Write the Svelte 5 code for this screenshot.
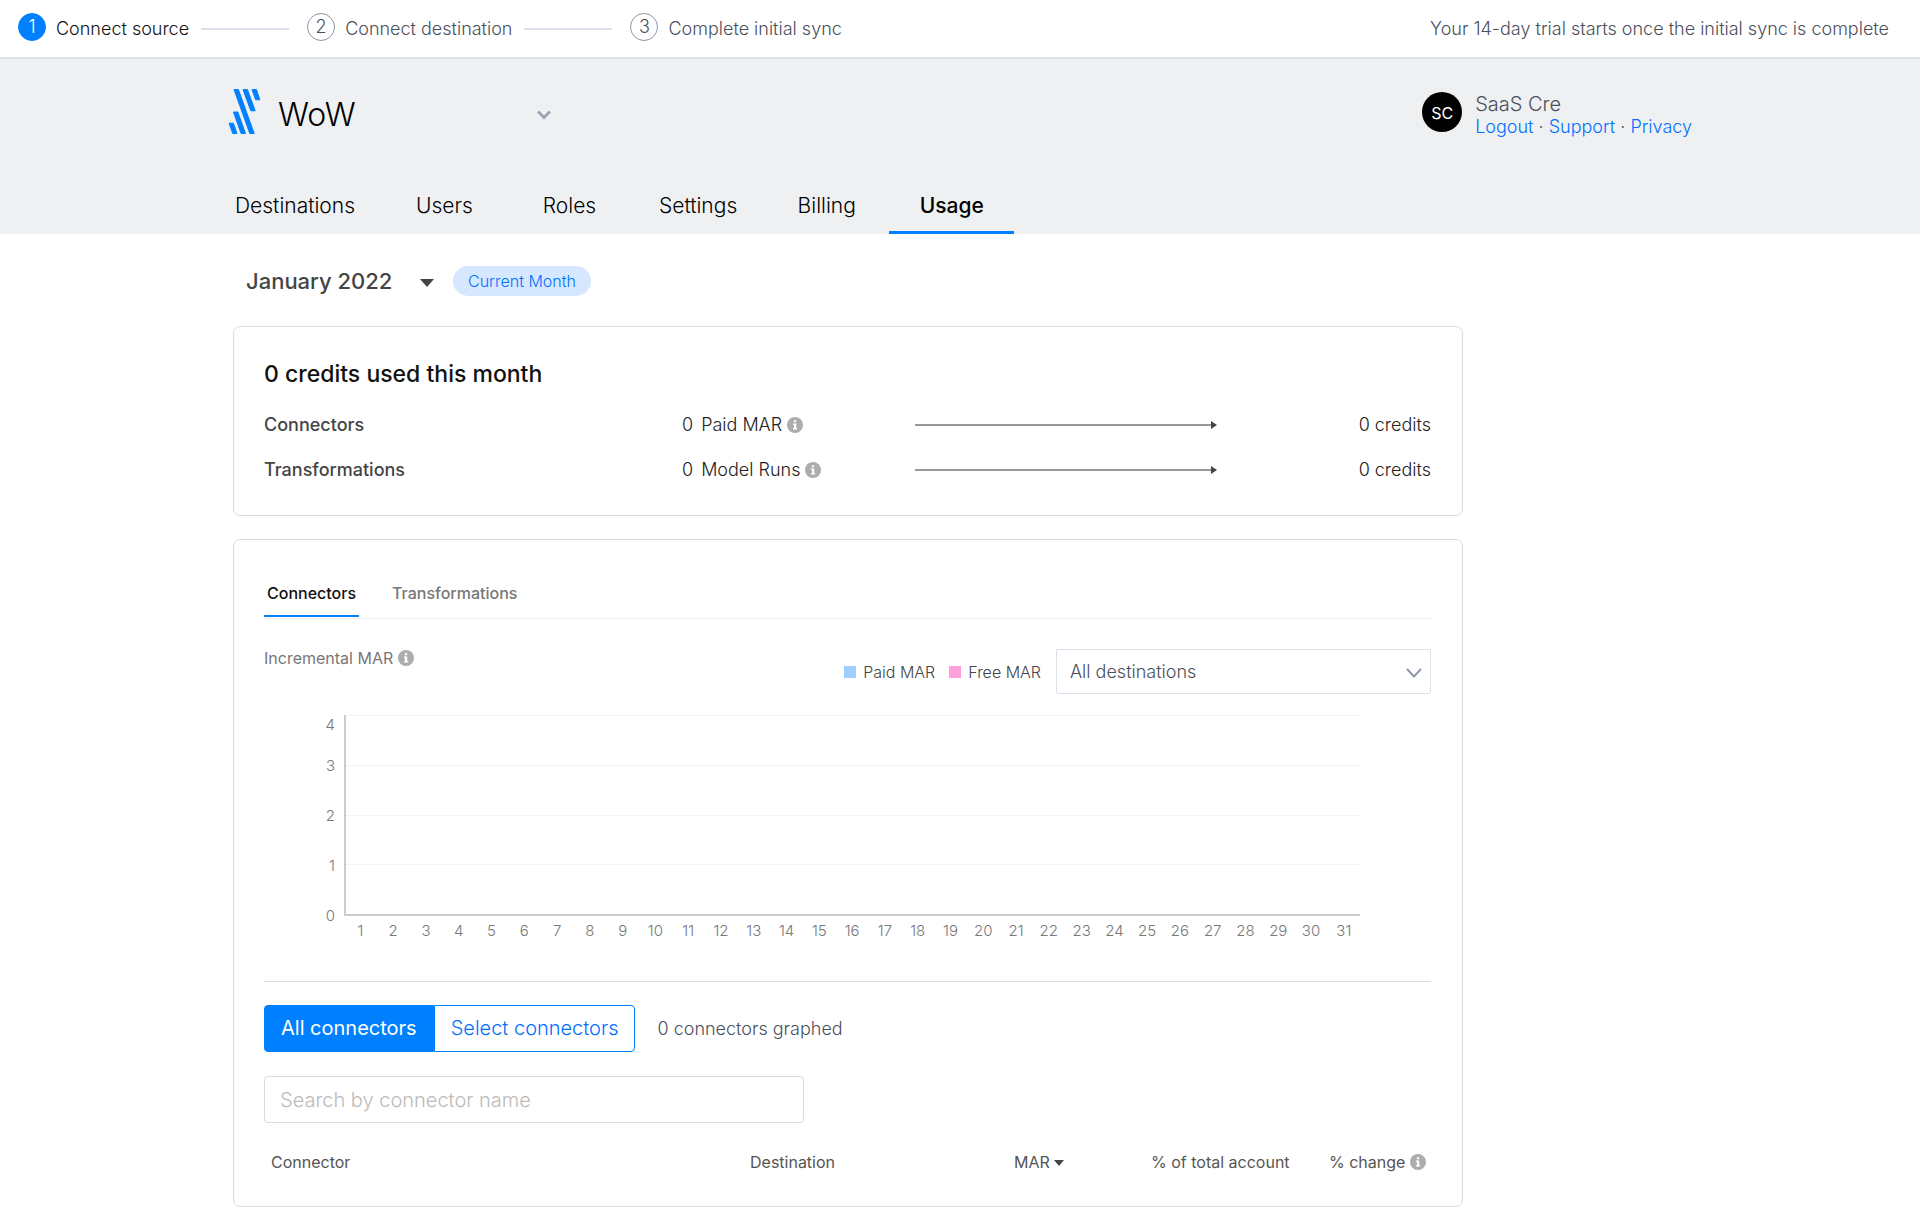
<script>
  // Onboarding steps
  const steps = ['Connect source', 'Connect destination', 'Complete initial sync'];
  let currentStep = 0;

  // Account navigation
  const navItems = ['Destinations', 'Users', 'Roles', 'Settings', 'Billing', 'Usage'];
  let activeNav = 'Usage';

  // Usage summary
  const usageRows = [
    { name: 'Connectors', count: 0, unit: 'Paid MAR', credits: 0 },
    { name: 'Transformations', count: 0, unit: 'Model Runs', credits: 0 }
  ];

  // Chart
  const tabs = ['Connectors', 'Transformations'];
  let activeTab = 'Connectors';
  const ticks = [4, 3, 2, 1, 0];
  const days = Array.from({ length: 31 }, (_, i) => i + 1);

  let month = 'January 2022';
  let destination = 'All destinations';
  let connectorMode = 'all';
  let search = '';
</script>

{#snippet info()}
  <svg class="info" viewBox="0 0 16 16" role="img" aria-label="More info">
    <circle cx="8" cy="8" r="8" fill="#adadad" />
    <path d="M6.9 3.2h2.3v2H6.9zM6 6.5h3.2v4.6h1v1.4H6v-1.4h1V7.9H6z" fill="#fff" />
  </svg>
{/snippet}

<div class="setup-bar">
  <ol class="steps">
    {#each steps as step, i}
      <li class="step" class:current={i === currentStep}>
        <span class="step-number">{i + 1}</span>
        <span class="step-label">{step}</span>
      </li>
    {/each}
  </ol>
  <span class="trial">Your 14-day trial starts once the initial sync is complete</span>
</div>

<header>
  <div class="container">
    <div class="account-row">
      <svg class="logo" viewBox="0 0 32 45" aria-hidden="true">
        <g fill="#0080ff" stroke="#0080ff" stroke-width="1" stroke-linejoin="round">
          <path d="M5.5 .5H9.9L25.7 44.5H21.3z" />
          <path d="M14.5 .5H18.9L26.7 21.8H22.3z" />
          <path d="M23.5 .5H27.9L31.4 10.8H27.1z" />
          <path d="M4.9 23H9.3L17 44.5H12.6z" />
          <path d="M.6 34.2H4.9L8.5 44.5H4.2z" />
        </g>
      </svg>
      <button type="button" class="account" aria-haspopup="listbox">
        WoW
        <svg class="chevron" viewBox="0 0 16 10" aria-hidden="true">
          <path d="M2 1.5l6 6 6-6" fill="none" stroke="#9aa3b2" stroke-width="2.8" />
        </svg>
      </button>
      <div class="user">
        <span class="avatar">SC</span>
        <div class="user-text">
          <div class="user-name">SaaS Cre</div>
          <div class="user-links">
            <a href="#logout">Logout</a> · <a href="#support">Support</a> · <a href="#privacy">Privacy</a>
          </div>
        </div>
      </div>
    </div>
    <nav>
      {#each navItems as item}
        <a
          href={'#' + item.toLowerCase()}
          class:active={item === activeNav}
          on:click={() => (activeNav = item)}>{item}</a>
      {/each}
    </nav>
  </div>
</header>

<main class="container">
  <div class="month-row">
    <div class="month">
      <select bind:value={month} aria-label="Month">
        <option>January 2022</option>
      </select>
      <svg class="caret" viewBox="0 0 14 8" aria-hidden="true">
        <path d="M0 0h14L7 8z" fill="#444" />
      </svg>
    </div>
    <span class="badge">Current Month</span>
  </div>

  <section class="card summary">
    <h2>0 credits used this month</h2>
    {#each usageRows as row}
      <div class="usage-row">
        <span class="usage-name">{row.name}</span>
        <span class="usage-count">
          <span>{row.count}</span>
          <span class="usage-unit">{row.unit}</span>
          {@render info()}
        </span>
        <span class="arrow"></span>
        <span class="credits">{row.credits} credits</span>
      </div>
    {/each}
  </section>

  <section class="card detail">
    <div class="tabs" role="tablist">
      {#each tabs as tab}
        <button
          type="button"
          role="tab"
          aria-selected={tab === activeTab}
          class:active={tab === activeTab}
          on:click={() => (activeTab = tab)}>{tab}</button>
      {/each}
    </div>

    <div class="chart-head">
      <span class="chart-title">Incremental MAR {@render info()}</span>
      <div class="legend">
        <span class="key"><i class="swatch paid"></i>Paid MAR</span>
        <span class="key"><i class="swatch free"></i>Free MAR</span>
      </div>
      <div class="destination">
        <select bind:value={destination} aria-label="Destination">
          <option>All destinations</option>
        </select>
        <svg class="chevron" viewBox="0 0 16 10" aria-hidden="true">
          <path d="M1 1l7 7.5L15 1" fill="none" stroke="#8f99a8" stroke-width="2" />
        </svg>
      </div>
    </div>

    <div class="chart">
      <div class="y-axis">
        {#each ticks as tick}
          <span>{tick}</span>
        {/each}
      </div>
      <div class="plot">
        {#each ticks.slice(1) as tick}
          <div class="band"></div>
        {/each}
      </div>
      <div class="x-axis">
        {#each days as day}
          <span>{day}</span>
        {/each}
      </div>
    </div>

    <div class="filter-row">
      <div class="toggle">
        <button
          type="button"
          class:on={connectorMode === 'all'}
          on:click={() => (connectorMode = 'all')}>All connectors</button>
        <button
          type="button"
          class:on={connectorMode === 'select'}
          on:click={() => (connectorMode = 'select')}>Select connectors</button>
      </div>
      <span class="graphed">0 connectors graphed</span>
    </div>

    <input
      class="search"
      type="text"
      placeholder="Search by connector name"
      aria-label="Search by connector name"
      bind:value={search}
    />

    <table>
      <thead>
        <tr>
          <th class="col-connector">Connector</th>
          <th class="col-destination">Destination</th>
          <th class="col-mar">
            MAR
            <svg class="sort" viewBox="0 0 10 6" aria-hidden="true">
              <path d="M0 0h10L5 6z" fill="#444" />
            </svg>
          </th>
          <th class="col-total">% of total account</th>
          <th>% change {@render info()}</th>
        </tr>
      </thead>
    </table>
  </section>
</main>

<style>
  :global(body) {
    margin: 0;
    background: #fff;
    color: #222;
    font-family: Inter, "Open Sans", sans-serif;
    font-size: 18px;
    font-weight: 300;
  }

  button,
  select,
  input {
    font: inherit;
    color: inherit;
  }

  button,
  select {
    padding: 0;
    border: 0;
    background: none;
    cursor: pointer;
  }

  select {
    appearance: none;
  }

  .container {
    box-sizing: border-box;
    max-width: 1464px;
    margin: 0 auto;
  }

  .info {
    width: 16px;
    height: 16px;
    flex: none;
    vertical-align: -2px;
  }

  /* Setup bar */
  .setup-bar {
    display: flex;
    align-items: center;
    justify-content: space-between;
    height: 57px;
    padding: 0 31px 0 18px;
    border-bottom: 2px solid #dbe2ec;
    color: #4a505c;
  }

  .steps {
    display: flex;
    margin: 0;
    padding: 0;
    list-style: none;
  }

  .step {
    display: flex;
    align-items: center;
  }

  .step + .step::before {
    content: "";
    width: 88px;
    height: 2px;
    margin: 0 18px 0 12px;
    background: #dbe0ec;
  }

  .step-number {
    box-sizing: border-box;
    width: 28px;
    height: 28px;
    margin: 0 10px 3px 0;
    border: 1px solid #8d95a5;
    border-radius: 50%;
    line-height: 26px;
    text-align: center;
  }

  .current {
    color: #111;
  }

  .current .step-number {
    border-color: #0080ff;
    background: #0080ff;
    color: #fff;
  }

  /* Header */
  header {
    background: #eff0f2;
  }

  .account-row {
    display: flex;
    align-items: center;
    height: 105px;
  }

  .logo {
    width: 33px;
    height: 45px;
    margin-right: 17px;
  }

  .account {
    display: flex;
    align-items: center;
    justify-content: space-between;
    width: 274px;
    padding-top: 6px;
    color: #000;
    font-size: 32px;
  }

  .chevron {
    width: 16px;
    height: 10px;
  }

  .user {
    display: flex;
    align-items: center;
    gap: 13px;
    margin-left: auto;
    color: #4a505c;
  }

  .avatar {
    width: 40px;
    height: 40px;
    border-radius: 50%;
    background: #000;
    color: #fff;
    font-size: 16px;
    font-weight: 400;
    line-height: 42px;
    text-align: center;
  }

  .user-text {
    padding-top: 6px;
  }

  .user-name {
    font-size: 20px;
    line-height: 24px;
  }

  .user-links {
    line-height: 22px;
  }

  .user-links a {
    color: #0070ff;
    text-decoration: none;
  }

  nav {
    display: flex;
    height: 70px;
    margin-left: -20px;
    font-size: 21px;
  }

  nav a {
    box-sizing: border-box;
    min-width: 125px;
    padding: 27px 27px 0;
    border-bottom: 3px solid transparent;
    color: #000;
    line-height: 30px;
    text-align: center;
    text-decoration: none;
  }

  nav .active {
    border-color: #0080ff;
    font-weight: 500;
  }

  /* Month picker */
  .month-row {
    display: flex;
    align-items: center;
    gap: 19px;
    padding: 32px 18px 30px;
  }

  .month {
    position: relative;
    width: 188px;
    color: #444;
    font-size: 22px;
    font-weight: 500;
  }

  .month select {
    width: 100%;
  }

  .caret {
    position: absolute;
    top: 11px;
    right: 0;
    width: 14px;
    height: 8px;
    pointer-events: none;
  }

  .badge {
    padding: 0 15px;
    border-radius: 15px;
    background: #d6e8ff;
    color: #0070ff;
    font-size: 16px;
    line-height: 30px;
  }

  /* Cards */
  .card {
    box-sizing: border-box;
    max-width: 1230px;
    margin: 0 5px 23px;
    padding: 0 31px 0 30px;
    border: 1px solid #dcdcdc;
    border-radius: 7px;
  }

  .summary {
    padding-top: 29px;
    padding-bottom: 23px;
  }

  h2 {
    margin: 0 0 10px;
    color: #111;
    font-size: 23px;
    font-weight: 500;
    line-height: 36px;
  }

  .usage-row {
    display: grid;
    grid-template-columns: 418px 233px 302px 1fr;
    align-items: center;
    line-height: 45px;
  }

  .usage-name {
    color: #444;
    font-weight: 500;
  }

  .usage-count {
    display: flex;
    align-items: center;
    gap: 5px;
  }

  .usage-unit {
    margin-left: 3px;
  }

  .arrow {
    display: flex;
    align-items: center;
  }

  .arrow::before {
    content: "";
    flex: 1;
    height: 2px;
    background: #999;
  }

  .arrow::after {
    content: "";
    border: 4px solid transparent;
    border-right: 0;
    border-left: 6px solid #444;
  }

  .credits {
    text-align: right;
  }

  .detail {
    padding-top: 34px;
    padding-bottom: 21px;
  }

  .tabs {
    display: flex;
    gap: 30px;
    border-bottom: 1px solid #eee;
    color: #777;
    font-size: 16px;
    font-weight: 500;
  }

  .tabs button {
    padding: 0 3px 2px;
    border-bottom: 2px solid transparent;
    margin-bottom: 1px;
    line-height: 39px;
  }

  .tabs .active {
    border-color: #0080ff;
    color: #111;
  }

  .chart-head {
    display: flex;
    align-items: center;
    margin-top: 30px;
    font-size: 16px;
  }

  .chart-title {
    align-self: flex-start;
    color: #777;
    font-weight: 400;
    line-height: 18px;
  }

  .legend {
    display: flex;
    gap: 14px;
    margin: 0 15px 0 auto;
    color: #444;
  }

  .key {
    display: flex;
    align-items: center;
    gap: 7px;
  }

  .swatch {
    width: 12px;
    height: 12px;
  }

  .paid {
    background: #9fcfff;
  }

  .free {
    background: #ff9fdc;
  }

  .destination {
    position: relative;
    width: 375px;
    color: #4a505c;
    font-size: 18px;
  }

  .destination select {
    box-sizing: border-box;
    width: 100%;
    height: 45px;
    padding: 0 13px;
    border: 1px solid #dbe0ea;
    border-radius: 2px;
  }

  .destination .chevron {
    position: absolute;
    top: 19px;
    right: 9px;
    pointer-events: none;
  }

  /* Chart */
  .chart {
    display: grid;
    grid-template-columns: 71px 1fr;
    margin: 21px 71px 40px 0;
    padding-left: 9px;
    color: #777;
    font-size: 15px;
    line-height: 20px;
  }

  .y-axis {
    height: 200px;
    padding-right: 9px;
    margin-top: -9px;
    text-align: right;
  }

  .y-axis span {
    display: block;
    height: 50px;
  }

  /* The top label sits below its gridline */
  .y-axis span:first-child {
    line-height: 38px;
  }

  .plot {
    display: flex;
    flex-direction: column;
    box-sizing: border-box;
    height: 201px;
    border-left: 2px solid #ccc;
    border-bottom: 2px solid #ccc;
  }

  .band {
    flex: 1;
    border-top: 1px solid #f3f3f3;
  }

  .x-axis {
    display: flex;
    grid-column: 2;
    padding-top: 5px;
  }

  .x-axis span {
    flex: 1 1 0;
    text-align: center;
  }

  /* Connector list */
  .filter-row {
    display: flex;
    align-items: center;
    gap: 22px;
    padding: 23px 0 24px;
    border-top: 1px solid #dcdcdc;
    color: #4a505c;
  }

  .toggle {
    display: flex;
    font-size: 20px;
  }

  .toggle button {
    padding: 0 16px;
    border: 1px solid #0080ff;
    border-radius: 0 4px 4px 0;
    color: #0070ff;
    line-height: 45px;
  }

  .toggle button:first-child {
    border-radius: 4px 0 0 4px;
  }

  .toggle .on {
    background: #0080ff;
    color: #fff;
    font-weight: 400;
  }

  .search {
    display: block;
    box-sizing: border-box;
    width: 540px;
    max-width: 100%;
    height: 47px;
    padding: 0 15px;
    border: 1px solid #dcdcdc;
    border-radius: 4px;
    font-size: 20px;
  }

  .search::placeholder {
    color: #bbb;
  }

  table {
    width: 100%;
    margin-top: 16px;
    border-collapse: collapse;
    color: #555;
    font-size: 16px;
    table-layout: fixed;
  }

  th {
    padding: 0 0 0 7px;
    font-weight: 400;
    line-height: 46px;
    text-align: left;
    white-space: nowrap;
  }

  .col-connector {
    width: 472px;
  }

  .col-destination {
    width: 257px;
  }

  .col-mar {
    width: 130px;
  }

  .col-total {
    width: 171px;
  }

  .sort {
    width: 10px;
    height: 6px;
    vertical-align: 2px;
  }
</style>
